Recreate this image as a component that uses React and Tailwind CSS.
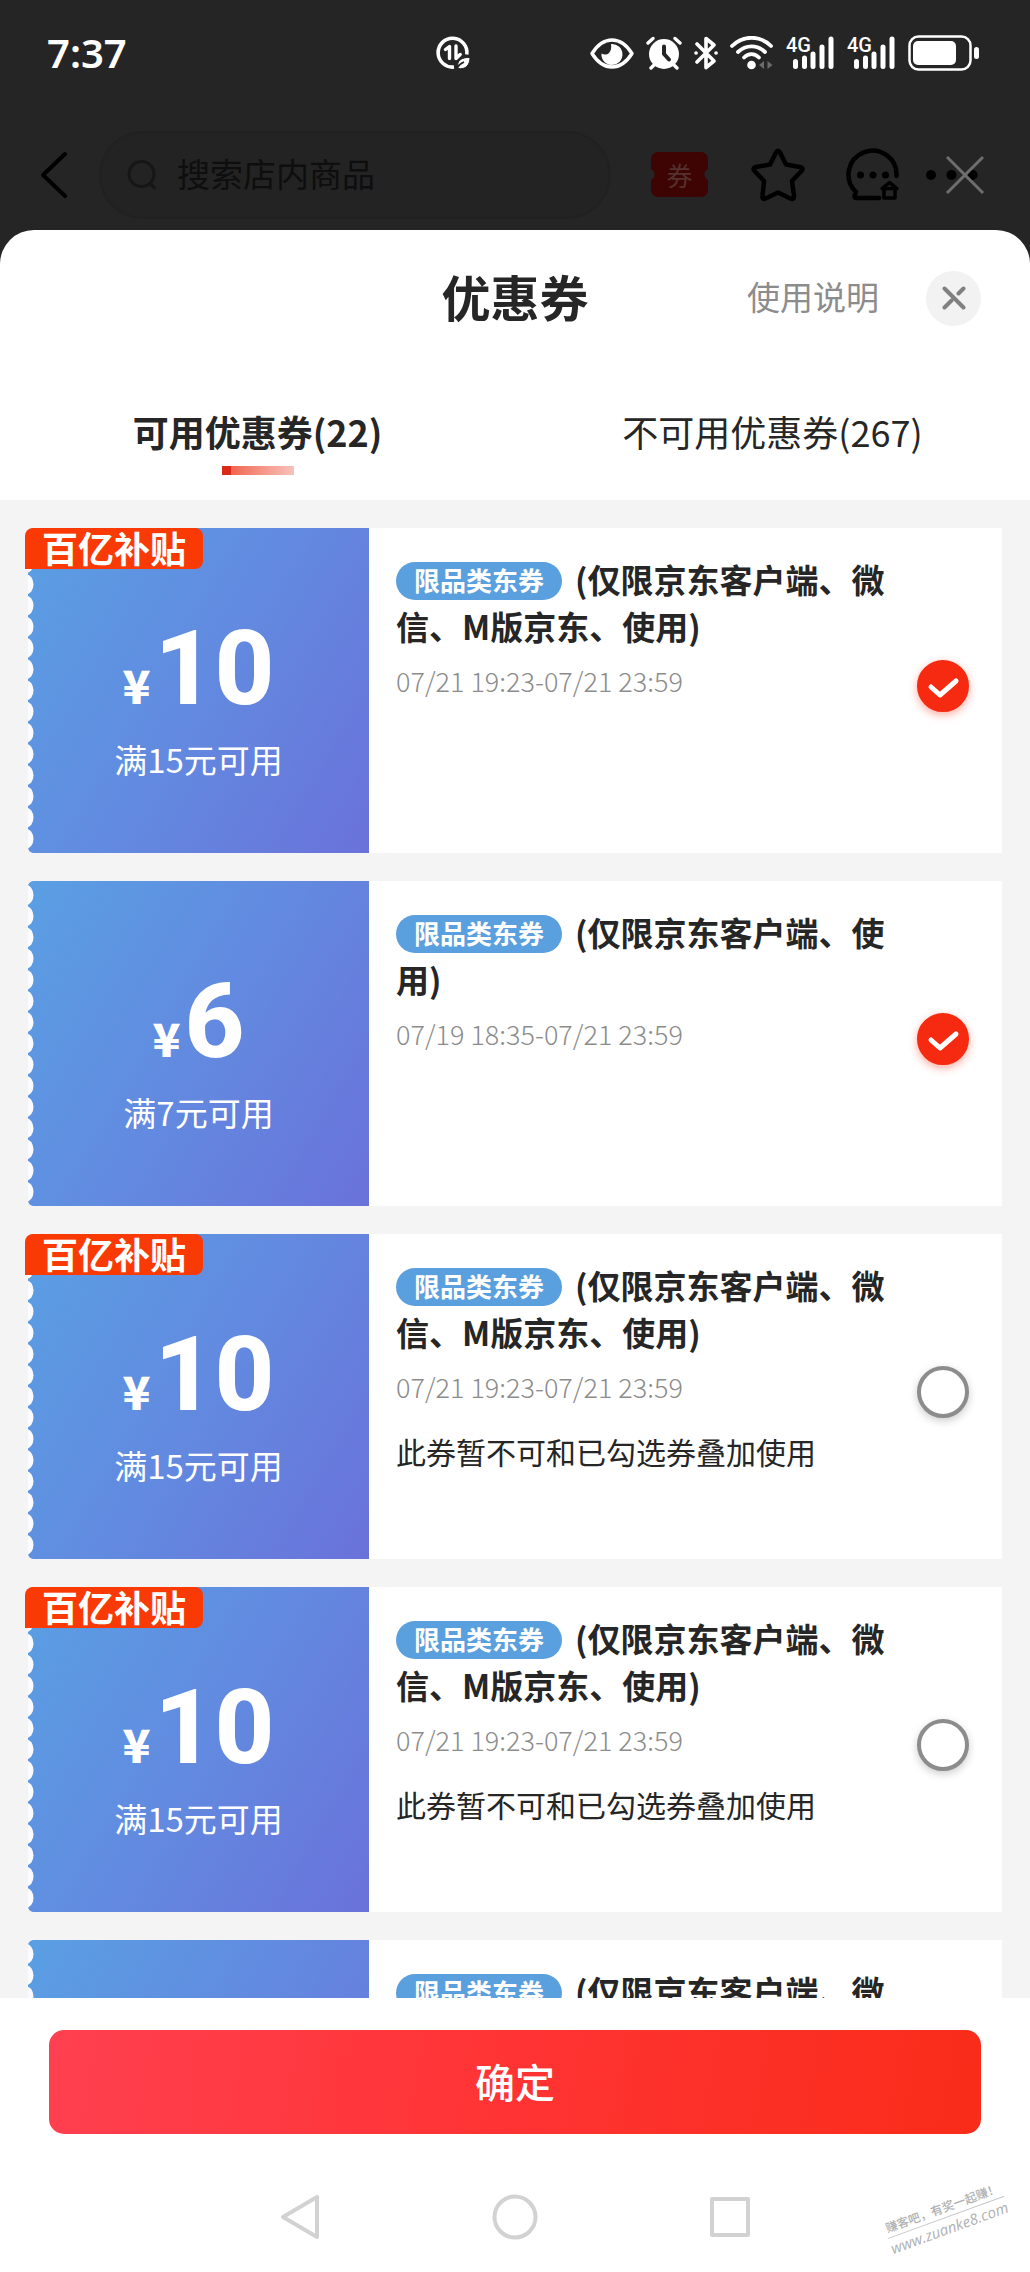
import React, { useState } from 'react';

const initialCoupons = [
    { id: 1, amount: 10, limit: '满15元可用', subsidy: true, title: '(仅限京东客户端、微信、M版京东、使用)', time: '07/21 19:23-07/21 23:59', checked: true },
    { id: 2, amount: 6, limit: '满7元可用', subsidy: false, title: '(仅限京东客户端、使用)', time: '07/19 18:35-07/21 23:59', checked: true },
    { id: 3, amount: 10, limit: '满15元可用', subsidy: true, title: '(仅限京东客户端、微信、M版京东、使用)', time: '07/21 19:23-07/21 23:59', note: '此券暂不可和已勾选券叠加使用', checked: false },
    { id: 4, amount: 10, limit: '满15元可用', subsidy: true, title: '(仅限京东客户端、微信、M版京东、使用)', time: '07/21 19:23-07/21 23:59', note: '此券暂不可和已勾选券叠加使用', checked: false },
    { id: 5, amount: 10, limit: '满15元可用', subsidy: false, title: '(仅限京东客户端、微信、M版京东、使用)', time: '07/21 19:23-07/21 23:59', note: '此券暂不可和已勾选券叠加使用', checked: false },
];

const DataSaverIcon = () => (
    <svg width="35" height="35" viewBox="0 0 35 35" fill="none" stroke="#fff">
        <path d="M30.8 18.5A14.4 14.4 0 1 0 18 31" strokeWidth="3.6" />
        <path d="M9.500 13.5 13.500 10.500v12" strokeWidth="3.4" strokeLinejoin="round" strokeLinecap="round" />
        <path d="M20 10v12.500l4.200-4" strokeWidth="3.4" strokeLinejoin="round" strokeLinecap="round" />
        <path d="M34 21.500c-8-.5-14 3-12 11C29.500 34 34 29 34 21.500Z" fill="#fff" stroke="#252525" strokeWidth="1" />
        <path d="M20 33c2-3.500 4.500-5.500 8-7" stroke="#252525" strokeWidth="1.6" />
    </svg>
);

const EyeIcon = () => (
    <svg width="44" height="31" viewBox="0 0 44 31" fill="none">
        <path d="M2 15.500C8 6 14.500 2 22 2s14 4 20 13.500C36 25 29.500 29 22 29S8 25 2 15.500Z" stroke="#fff" strokeWidth="3.4" strokeLinejoin="round" />
        <path d="M21 6a10.500 10.500 0 1 1-9.500 9.500c2.500 1.600 5.500 1.400 7.500-.5 2.200-2.300 2.600-5.600 2-9Z" fill="#fff" />
    </svg>
);

const AlarmIcon = () => (
    <svg width="36" height="34" viewBox="0 0 36 34" fill="none" strokeLinecap="round">
        <circle cx="18" cy="18" r="15" fill="#fff" />
        <path d="m2 7 5-4.500M34 7l-5-4.500M9 28l-4 4M27 28l4 4" stroke="#fff" strokeWidth="3.4" />
        <path d="M18 10.500V18l5 5.500" stroke="#252525" strokeWidth="4" strokeLinejoin="round" />
    </svg>
);

const BluetoothIcon = () => (
    <svg width="24" height="34" viewBox="0 0 24 34" fill="none" stroke="#fff" strokeWidth="3.6" strokeLinecap="round" strokeLinejoin="round">
        <path d="m3 8 17 17-8 6.500V2.500L20 9 3 26" />
        <path d="M2 17h.1M22 17h.1" />
    </svg>
);

const WifiIcon = () => (
    <svg width="44" height="34" viewBox="0 0 44 34" fill="none" stroke="#fff" strokeWidth="3.800" strokeLinecap="round">
        <path d="M2 10C13-1 30-1 41 10" />
        <path d="M8 16c8-7.500 19-7.500 27 0" />
        <path d="M14 21.500c4.500-4.500 10.500-4.500 15 0" />
        <circle cx="21.500" cy="29" r="4.300" fill="#fff" stroke="none" />
        <path d="M34 25v8l-5-4zM37.500 25v8l5-4z" fill="#6b6b6b" stroke="none" />
    </svg>
);

const SignalIcon = () => (
    <div className="relative">
        <svg width="49" height="34" viewBox="0 0 49 34">
            <path d="M9.500 25.500v5M18.500 22v8.500M27 18v12.500M36 11v19.500M45 3v27.500" stroke="#fff" strokeWidth="5" strokeLinecap="round" />
        </svg>
        <span className="absolute -top-[3px] left-0 font-['Roboto'] text-[20px] leading-[24px] font-medium">4G</span>
    </div>
);

const BatteryIcon = () => (
    <svg width="72" height="36" viewBox="0 0 72 36" fill="none">
        <rect x="1.500" y="1.500" width="61" height="33" rx="9" stroke="#fff" strokeWidth="2.500" />
        <rect x="5" y="6" width="43" height="24" rx="5" fill="#fff" />
        <rect x="66" y="12" width="5" height="12" rx="2.500" fill="#fff" />
    </svg>
);

const StatusBar = () => (
    <div className="flex h-[106px] items-center pr-[50px] pl-[47px] text-white">
        <span className="w-[389px] font-['Noto_Sans'] text-[40px] leading-[48px] font-semibold">7:37</span>
        <DataSaverIcon />
        <div className="ml-auto flex items-center gap-[12px]">
            <EyeIcon />
            <AlarmIcon />
            <BluetoothIcon />
            <WifiIcon />
            <SignalIcon />
            <SignalIcon />
            <BatteryIcon />
        </div>
    </div>
);

// Store page header, dimmed behind the sheet
const StoreHeader = () => (
    <div className="mt-[25px] mb-[11px] flex h-[88px] items-center pr-[40px] pl-[40px]">
        <button type="button" aria-label="返回">
            <svg width="28" height="48" viewBox="0 0 28 48" fill="none" stroke="#000" strokeWidth="4" strokeLinecap="round" strokeLinejoin="round">
                <path d="M25 3 3 24l22 21" />
            </svg>
        </button>
        <div className="ml-[31px] flex h-[88px] flex-1 items-center rounded-full border-2 border-[#212121] bg-[#232323] pl-[26px]">
            <svg width="30" height="32" viewBox="0 0 30 32" fill="none" stroke="#161616" strokeWidth="3" strokeLinecap="round">
                <circle cx="14.500" cy="15" r="12.500" />
                <path d="m24 25 3.500 4" />
            </svg>
            <input
                type="text"
                aria-label="搜索"
                placeholder="搜索店内商品"
                className="ml-[20px] w-[300px] bg-transparent pb-[4px] text-[33px] leading-[48px] outline-none placeholder:text-[#0e0e0e]"
            />
        </div>
        <div className="ml-[40px] flex items-center">
            <button type="button" aria-label="领券" className="relative">
                <svg width="57" height="46" viewBox="0 0 57 46">
                    <path d="M7 0h43a7 7 0 0 1 7 7v10a6 6 0 0 0 0 11v10a7 7 0 0 1-7 7H7a7 7 0 0 1-7-7V28a6 6 0 0 0 0-11V7a7 7 0 0 1 7-7Z" fill="#3d0403" />
                </svg>
                <span className="absolute inset-0 text-center text-[26px] leading-[46px] text-[#54302e]">券</span>
            </button>
            <button type="button" aria-label="收藏" className="ml-[43px]">
                <svg width="54" height="54" viewBox="0 0 54 54" fill="none" stroke="#000" strokeWidth="4.500" strokeLinejoin="round">
                    <path d="M25 4.500Q27 1 29 4.500l6 12 14 2.500q4 1 1.500 4L41 33l2 15q0 4-3.500 2.500L27 44.500 14.500 50.500Q11 52 11.500 48l1.500-15L3.500 23Q1 20 5 19l14-2.500Z" />
                </svg>
            </button>
            <button type="button" aria-label="客服" className="ml-[41px]">
                <svg width="54" height="54" viewBox="0 0 54 54" fill="none" stroke="#000" strokeWidth="4.500" strokeLinecap="round">
                    <path d="M50.500 28A24 24 0 1 0 10 44l-1.500 4q0 2 2 2H33" strokeLinejoin="round" />
                    <path d="M38 40.500h11V50H38zM36 40.500l7.500-6 7.500 6" strokeWidth="3.500" strokeLinejoin="round" />
                    <g fill="#000" stroke="none">
                        <circle cx="14.500" cy="27" r="3.500" />
                        <circle cx="27" cy="27" r="3.500" />
                        <circle cx="39.500" cy="27" r="3.500" />
                    </g>
                </svg>
            </button>
            <button type="button" aria-label="更多" className="ml-[26px]">
                <svg width="64" height="40" viewBox="0 0 64 40">
                    <circle cx="5" cy="20" r="5" />
                    <circle cx="25.500" cy="20" r="5" />
                    <circle cx="46.500" cy="20" r="5" />
                    <path d="m21 2 36 36M57 2 21 38" stroke="#6e6e6e" strokeWidth="3" />
                </svg>
            </button>
        </div>
    </div>
);

// Row of half-round notches on the ticket's left edge
const TicketEdge = () => (
    <svg className="absolute top-0 left-0" width="6" height="325" viewBox="0 0 6 325">
        <path d="M0 0h5Q0 1 0 6ZM0 325h5Q0 324 0 319Z" fill="#f4f4f4" />
        {Array.from({ length: 15 }, (_, i) => (
            <ellipse key={i} cx="-2" cy={14 + i * 21.2} rx="7.500" ry="10" fill="#fbfcff" />
        ))}
    </svg>
);

const CouponCard = ({ coupon, onToggle }) => (
    <li className="flex h-[325px] shrink-0 bg-white">
        <div className="relative flex w-[341px] shrink-0 flex-col items-center bg-linear-[120deg,#5a9fe3,#628ae0_50%,#6a72da]">
            <TicketEdge />
            {coupon.subsidy && (
                <span className="absolute top-0 -left-[3px] flex h-[41px] w-[178px] items-center justify-center rounded-[8px] rounded-bl-none bg-[#fa3a05] pb-[4px] text-[36px] leading-[36px] font-bold text-white">
                    百亿补贴
                </span>
            )}
            <p className="mt-[81px] flex items-baseline text-white">
                <span className="text-[46px] leading-[48px] font-black">¥</span>
                <span className="ml-[4px] font-['Roboto'] text-[104px] leading-[120px] font-extrabold">{coupon.amount}</span>
            </p>
            <p className="mt-[6px] text-[33px] leading-[48px] text-white">{coupon.limit}</p>
        </div>
        <div className="min-w-0 flex-1 pt-[28px] pl-[27px]">
            <h2 className="text-[33px] leading-[47px] font-bold text-[#262626]">
                <span className="mt-[6px] mr-[13px] inline-block h-[38px] rounded-full bg-[#5a9fde] px-[18px] align-top text-[26px] leading-[36px] text-white">
                    限品类东券
                </span>
                {coupon.title}
            </h2>
            <p className="mt-[11px] text-[27px] leading-[40px] font-light text-[#8c8c8c]">{coupon.time}</p>
            {coupon.note && (
                <p className="mt-[22px] text-[30px] leading-[44px] text-[#262626]">{coupon.note}</p>
            )}
        </div>
        <label className="relative mt-[132px] mr-[33px] ml-[20px] size-[52px] shrink-0">
            <input
                type="checkbox"
                aria-label={coupon.title}
                checked={coupon.checked}
                onChange={() => onToggle(coupon.id)}
                className="peer block size-[52px] appearance-none rounded-full border-4 border-[#8c8c8c] bg-white shadow-[0_3px_8px_rgba(0,0,0,0.2)] checked:border-[#f62a10] checked:bg-[#f62a10] checked:shadow-[0_3px_8px_rgba(246,42,16,0.4)]"
            />
            <svg className="pointer-events-none absolute inset-0 hidden peer-checked:block" width="52" height="52" viewBox="0 0 52 52" fill="none" stroke="#fff" strokeWidth="5" strokeLinecap="round" strokeLinejoin="round">
                <path d="m14 27 9 8L39 21" />
            </svg>
        </label>
    </li>
);

const App = () => {
    const [coupons, setCoupons] = useState(initialCoupons);
    const [tab, setTab] = useState('usable');

    const tabs = [
        { key: 'usable', label: '可用优惠券(22)' },
        { key: 'unusable', label: '不可用优惠券(267)' },
    ];

    const toggleCoupon = (id) => {
        setCoupons(coupons.map(c => c.id === id ? { ...c, checked: !c.checked } : c));
    };

    return (
        <div className="flex h-screen flex-col bg-[#252525] font-['Noto_Sans_CJK_SC',sans-serif]">
            <header>
                <StatusBar />
                <StoreHeader />
            </header>

            <main className="flex min-h-0 flex-1 flex-col overflow-hidden rounded-t-[34px] bg-white">
                <div className="grid h-[136px] shrink-0 grid-cols-3 items-center">
                    <h1 className="col-start-2 pb-[4px] text-center text-[49px] leading-[60px] font-bold text-[#262626]">优惠券</h1>
                    <div className="flex items-center justify-end gap-[47px] pr-[49px]">
                        <a href="#help" className="pb-[4px] text-[33px] leading-[48px] text-[#8c8c8c]">使用说明</a>
                        <button type="button" aria-label="关闭" className="flex size-[55px] items-center justify-center rounded-full bg-[#f2f2f2]">
                            <svg width="24" height="24" viewBox="0 0 24 24" fill="none" stroke="#808080" strokeWidth="4" strokeLinecap="round">
                                <path d="m2.500 2.500 19 19M21.500 2.500l-5 5M9.500 14.500l-7 7" />
                            </svg>
                        </button>
                    </div>
                </div>

                <div className="grid h-[134px] shrink-0 grid-cols-2">
                    {tabs.map(t => (
                        <button
                            key={t.key}
                            type="button"
                            onClick={() => setTab(t.key)}
                            className={`relative pb-[4px] text-[36px] leading-[48px] text-[#262626] ${tab === t.key ? 'font-bold' : ''}`}
                        >
                            {t.label}
                            {tab === t.key && (
                                <span className="absolute bottom-[25px] left-1/2 h-[9px] w-[72px] -translate-x-1/2 bg-linear-to-r from-[#d92b18] from-12% via-[#f0644f] via-12% to-[#f5c2bc]" />
                            )}
                        </button>
                    ))}
                </div>

                <ul className="flex min-h-0 flex-1 flex-col gap-[28px] overflow-y-auto bg-[#f4f4f4] px-[28px] pt-[28px] [scrollbar-width:none]">
                    {coupons.map(coupon => (
                        <CouponCard key={coupon.id} coupon={coupon} onToggle={toggleCoupon} />
                    ))}
                </ul>

                <footer className="relative shrink-0 px-[49px] pt-[32px]">
                    <button type="button" className="h-[104px] w-full rounded-[15px] bg-linear-[100deg,#ff4050,#ff3333_50%,#f92c19] pb-[2px] text-[40px] leading-[60px] font-medium text-white">
                        确定
                    </button>
                    <nav className="flex h-[138px] items-center justify-center gap-[172px] pt-[28px]">
                        <button type="button" aria-label="返回">
                            <svg width="40" height="46" viewBox="0 0 40 46" fill="none" stroke="#d2d2d2" strokeWidth="4" strokeLinejoin="round">
                                <path d="M3 23 37 3v40Z" />
                            </svg>
                        </button>
                        <button type="button" aria-label="主页">
                            <svg width="46" height="46" viewBox="0 0 46 46" fill="none" stroke="#d2d2d2" strokeWidth="4">
                                <circle cx="23" cy="23" r="20.500" />
                            </svg>
                        </button>
                        <button type="button" aria-label="最近任务">
                            <svg width="40" height="46" viewBox="0 0 40 46" fill="none" stroke="#d2d2d2" strokeWidth="4" strokeLinejoin="round">
                                <rect x="2" y="5" width="36" height="36" />
                            </svg>
                        </button>
                    </nav>
                    <div className="absolute right-[22px] bottom-[34px] -rotate-20 text-center text-[#b0b0b0]">
                        <p className="border-b border-[#c8c8c8] text-[12px] leading-[20px] font-medium">赚客吧，有奖一起赚！</p>
                        <p className="font-['Open_Sans'] text-[15px] leading-[20px] font-medium italic">www.zuanke8.com</p>
                    </div>
                </footer>
            </main>
        </div>
    );
};

export default App;
